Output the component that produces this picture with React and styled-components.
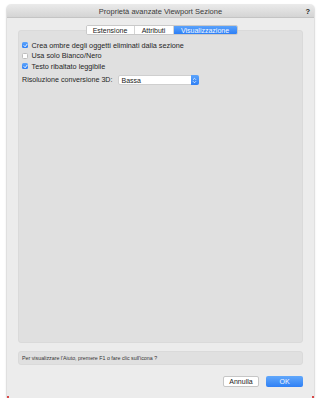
import React from 'react';
import styled, { createGlobalStyle } from 'styled-components';

const GlobalStyle = createGlobalStyle`
  html, body {
    margin: 0;
    padding: 0;
    background: #ffffff;
  }
  body {
    font-family: "Liberation Sans", Arial, sans-serif;
    color: #222;
  }
`;

const Window = styled.div`
  position: relative;
  margin: 5px 0 0 7px;
  width: 307px;
  height: 393px;
  display: flex;
  flex-direction: column;
  background: #ececec;
  border-radius: 4px 4px 0 0;
  box-shadow: 0 0 0 1px rgba(0, 0, 0, 0.06), 0 1px 3px rgba(0, 0, 0, 0.18);
  box-sizing: border-box;
`;

const TitleBar = styled.div`
  position: relative;
  height: 13px;
  flex: none;
  display: flex;
  align-items: center;
  justify-content: center;
  background: linear-gradient(#e9e9e9, #d4d4d4);
  border-bottom: 1px solid #c4c4c4;
  border-radius: 4px 4px 0 0;
  box-sizing: border-box;
  font-size: 7.5px;
  color: #3a3a3a;
`;

const HelpMark = styled.span`
  position: absolute;
  right: 4px;
  top: 2px;
  font-weight: bold;
  font-size: 7.5px;
  color: #222;
`;

const Body = styled.div`
  flex: 1;
  display: flex;
  flex-direction: column;
  padding: 12px 11px 11px;
`;

const Panel = styled.div`
  height: 313px;
  flex: none;
  display: flex;
  flex-direction: column;
  background: #e0e0e0;
  border: 1px solid #dadada;
  border-radius: 3px;
  box-sizing: border-box;
  padding: 0 3px;
`;

const Tabs = styled.div`
  align-self: center;
  display: flex;
  height: 10px;
  margin: -6px 0 0 2px;
  background: #ffffff;
  border: 1px solid #c9c9c9;
  border-radius: 2px;
  box-sizing: border-box;
  overflow: hidden;
`;

const Tab = styled.div`
  width: ${p => p.$w}px;
  display: flex;
  align-items: center;
  justify-content: center;
  font-size: 7px;
  color: ${p => (p.$active ? '#f4f8ff' : '#222')};
  background: ${p => (p.$active ? 'linear-gradient(#5aa2fb, #2d7ff6)' : '#fff')};
  border-left: ${p => (p.$first ? 'none' : '1px solid #d4d4d4')};
`;

const Options = styled.div`
  display: flex;
  flex-direction: column;
  padding-top: 5px;
`;

const Row = styled.label`
  display: flex;
  align-items: center;
  height: 10.6px;
  font-size: 7.25px;
  color: #262626;
  gap: 3.5px;
`;

const Box = styled.span`
  width: 6px;
  height: 6px;
  flex: none;
  display: flex;
  align-items: center;
  justify-content: center;
  border-radius: 1.5px;
  box-sizing: border-box;
  background: ${p => (p.$checked ? 'linear-gradient(#5ea5fb, #2f80f5)' : '#fff')};
  border: ${p => (p.$checked ? 'none' : '1px solid #bdbdbd')};
`;

const SelectRow = styled.div`
  display: flex;
  align-items: center;
  height: 13px;
  margin-top: 2px;
  font-size: 7.15px;
  color: #262626;
  gap: 5px;
`;

const Select = styled.div`
  width: 81px;
  height: 10px;
  display: flex;
  align-items: center;
  background: #fff;
  border: 1px solid #cfcfcf;
  border-radius: 2px;
  box-sizing: border-box;
  padding-left: 3px;
  font-size: 7px;
  color: #222;
`;

const SelectValue = styled.span`
  flex: 1;
`;

const Stepper = styled.span`
  width: 8px;
  height: 10px;
  margin-right: -1px;
  display: flex;
  align-items: center;
  justify-content: center;
  background: linear-gradient(#5ca4fb, #2e7ff5);
  border-radius: 0 2px 2px 0;
`;

const HelpBox = styled.div`
  height: 14px;
  margin-top: 8px;
  display: flex;
  align-items: center;
  padding-left: 3px;
  background: #e0e0e0;
  border: 1px solid #dadada;
  border-radius: 3px;
  box-sizing: border-box;
  font-size: 5.3px;
  color: #333;
`;

const Footer = styled.div`
  display: flex;
  justify-content: flex-end;
  gap: 7px;
  margin-top: 11px;
`;

const Button = styled.div`
  width: ${p => p.$w}px;
  height: 11px;
  display: flex;
  align-items: center;
  justify-content: center;
  box-sizing: border-box;
  border-radius: 2px;
  font-size: 7px;
  color: ${p => (p.$primary ? '#f2f7ff' : '#222')};
  background: ${p => (p.$primary ? 'linear-gradient(#62a8fb, #2f80f5)' : '#fff')};
  border: ${p => (p.$primary ? 'none' : '1px solid #c6c6c6')};
`;

const Corner = styled.span`
  position: absolute;
  bottom: 0;
  ${p => (p.$right ? 'right: 0;' : 'left: 0;')}
  width: 2px;
  height: 2px;
  background: #d84848;
`;

const Check = () => (
  <svg width="5" height="5" viewBox="0 0 10 10">
    <path d="M2 5.2 L4.2 7.6 L8.2 2.4" fill="none" stroke="#fff" strokeWidth="1.8" strokeLinecap="round" strokeLinejoin="round" />
  </svg>
);

const Arrows = () => (
  <svg width="5" height="7" viewBox="0 0 10 14">
    <path d="M2.5 5 L5 2.5 L7.5 5 M2.5 9 L5 11.5 L7.5 9" fill="none" stroke="#fff" strokeWidth="1.5" strokeLinecap="round" strokeLinejoin="round" />
  </svg>
);

const options = [
  { label: 'Crea ombre degli oggetti eliminati dalla sezione', checked: true },
  { label: 'Usa solo Bianco/Nero', checked: false },
  { label: 'Testo ribaltato leggibile', checked: true },
];

const App = () => {
  return (
    <>
      <GlobalStyle />
      <Window>
        <TitleBar>
          Proprietà avanzate Viewport Sezione
          <HelpMark>?</HelpMark>
        </TitleBar>
        <Body>
          <Panel>
            <Tabs>
              <Tab $w={47} $first>Estensione</Tab>
              <Tab $w={38}>Attributi</Tab>
              <Tab $w={63} $active>Visualizzazione</Tab>
            </Tabs>
            <Options>
              {options.map(o => (
                <Row key={o.label}>
                  <Box $checked={o.checked}>{o.checked && <Check />}</Box>
                  {o.label}
                </Row>
              ))}
              <SelectRow>
                Risoluzione conversione 3D:
                <Select>
                  <SelectValue>Bassa</SelectValue>
                  <Stepper>
                    <Arrows />
                  </Stepper>
                </Select>
              </SelectRow>
            </Options>
          </Panel>
          <HelpBox>Per visualizzare l'Aiuto, premere F1 o fare clic sull'icona ?</HelpBox>
          <Footer>
            <Button $w={36}>Annulla</Button>
            <Button $w={37} $primary>OK</Button>
          </Footer>
        </Body>
        <Corner />
        <Corner $right />
      </Window>
    </>
  );
};

export default App;
